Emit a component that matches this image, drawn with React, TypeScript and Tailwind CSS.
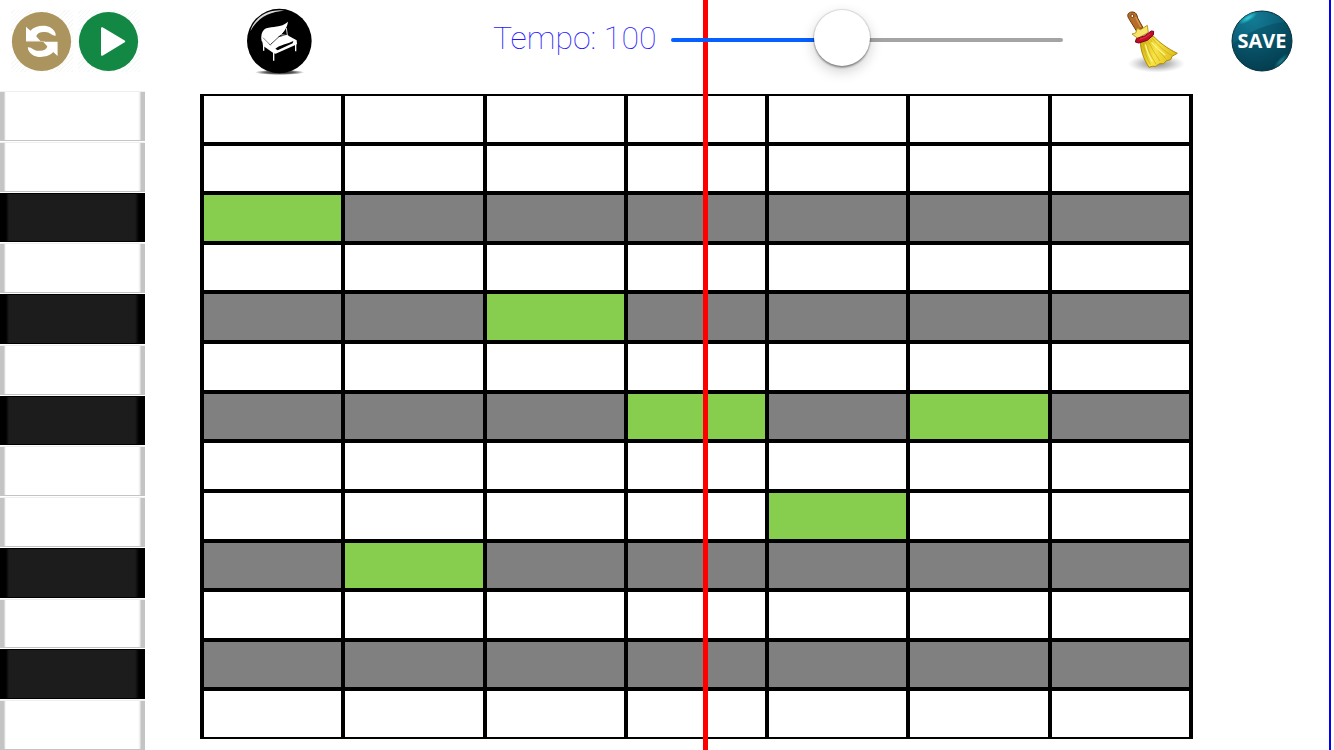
import { useState } from "react";

const NOTES = ["C5", "B4", "A#4", "A4", "G#4", "G4", "F#4", "F4", "E4", "D#4", "D4", "C#4", "C4"];
const STEPS = [0, 1, 2, 3, 4, 5, 6];
const MAX_TEMPO = 235;

function RestartIcon() {
  return (
    <svg viewBox="0 0 62 62" className="block size-full" aria-hidden="true">
      <circle cx="30.5" cy="31.5" r="29.6" fill="#ab945d" />
      <g fill="#fff">
        <path d="M15 16.7 19.4 20.7C24 15.4 34.5 14.4 39.5 17.6 43 19.6 44.8 22.8 44.8 25.6 40.5 26 39.5 22 34 22 29.5 21.6 26.2 23.2 25.2 26.2L29.4 31H15Z" />
        <path transform="rotate(180 30.8 31.4)" d="M15 16.7 19.4 20.7C24 15.4 34.5 14.4 39.5 17.6 43 19.6 44.8 22.8 44.8 25.6 40.5 26 39.5 22 34 22 29.5 21.6 26.2 23.2 25.2 26.2L29.4 31H15Z" />
      </g>
      <path d="M15 31.4H34" stroke="#d5c9ae" strokeWidth="1" />
    </svg>
  );
}

function PlayIcon() {
  return (
    <svg viewBox="0 0 62 62" className="block size-full" aria-hidden="true">
      <circle cx="30.5" cy="31.5" r="29.6" fill="#138844" />
      <path d="M24 18.2 46.2 31.4 24 44.8Z" fill="#fff" stroke="#fff" strokeWidth="2" strokeLinejoin="round" />
    </svg>
  );
}

function PianoIcon() {
  return (
    <svg viewBox="33 21 204 204" className="block size-full" aria-hidden="true">
      <defs>
        <radialGradient id="pianoShade">
          <stop offset="0" stopColor="#000" />
          <stop offset="0.6" stopColor="#000" stopOpacity="0.6" />
          <stop offset="1" stopColor="#000" stopOpacity="0" />
        </radialGradient>
      </defs>
      <ellipse cx="134" cy="217" rx="74" ry="8" fill="url(#pianoShade)" />
      <circle cx="133" cy="123" r="97" fill="#000" />
      <path d="M46 94C55 62 82 36 118 32 128 30 138 30 148 32 104 34 66 54 46 94Z" fill="#fff" opacity="0.85" />
      <path d="M80 124C77 104 81 91 94 85 112 77 138 85 159 65 156 88 140 106 106 134Z" fill="#fff" />
      <path d="M80 112 106 136 130 108 156 105 185 121 186 132 181 135 122 161 116 160 84 137Z" fill="#fff" />
      <path d="M108 132 141 102" stroke="#000" strokeWidth="2" />
      <path d="M128 112C140 103 150 94 156 83L158 104 147 107Z" fill="#000" />
      <path d="M154 84 157 105M136 104 160 107" stroke="#fff" strokeWidth="2.5" fill="none" />
      <path d="M121 146C134 135 158 132 175 123L173 130 128 151Z" fill="#000" />
      <path d="M84 113 107 136" stroke="#000" strokeWidth="1.5" fill="none" />
      <path d="M86 134V152M116 158V182M182 131V154" stroke="#fff" strokeWidth="4" />
    </svg>
  );
}

function BroomIcon() {
  return (
    <svg viewBox="38 24 186 195" className="block size-full" aria-hidden="true">
      <defs>
        <radialGradient id="broomShade">
          <stop offset="0" stopColor="#777" stopOpacity="0.9" />
          <stop offset="0.5" stopColor="#999" stopOpacity="0.6" />
          <stop offset="1" stopColor="#bbb" stopOpacity="0" />
        </radialGradient>
        <linearGradient id="straw" x1="0" x2="1" y1="0.4" y2="0.6">
          <stop offset="0" stopColor="#d3b512" />
          <stop offset="0.4" stopColor="#f7e545" />
          <stop offset="1" stopColor="#dcb916" />
        </linearGradient>
      </defs>
      <ellipse cx="138" cy="188" rx="86" ry="27" fill="url(#broomShade)" />
      <path d="M55 52C47 38 58 32 68 33 78 34 80 42 82 51L98 80 79 91Z" fill="#b56d27" stroke="#6f3c0d" strokeWidth="3" />
      <path d="M76 48 91 78" stroke="#d89549" strokeWidth="4" />
      <circle cx="66" cy="45" r="4.5" fill="#fff" stroke="#6f3c0d" strokeWidth="3" />
      <path d="M65 99 76 96 81 82 91 86 111 73 114 94 82 112Z" fill="#f8e36b" stroke="#ae8a08" strokeWidth="2.5" strokeLinejoin="round" />
      <path d="M90 122C91 148 99 173 116 199L126 196 136 196 148 188 160 188 168 179 181 176 185 166 201 157C171 142 147 125 129 105Z" fill="url(#straw)" stroke="#b08b08" strokeWidth="3" strokeLinejoin="round" />
      <path d="M98 121Q102 160 120 190M104 119Q116 158 137 190M111 116Q130 154 149 180M118 113Q143 150 168 175M124 110Q153 146 184 163" fill="none" stroke="#c9a81c" strokeWidth="2" />
      <path d="M105 130Q112 160 126 182M124 124Q144 148 164 162" fill="none" stroke="#fff78b" strokeWidth="4" />
      <path d="M78 113Q105 107 123 90L130 91 129 102 111 118 85 126 75 123Z" fill="#c40b27" stroke="#770515" strokeWidth="3" />
      <path d="M88 115Q108 110 120 99" stroke="#ef4a5d" strokeWidth="2" fill="none" />
    </svg>
  );
}

function SaveDisc() {
  return (
    <svg viewBox="0 0 62 62" className="col-start-1 row-start-1 block size-full" aria-hidden="true">
      <defs>
        <radialGradient id="disc" cx="0.35" cy="0.12" r="0.95">
          <stop offset="0" stopColor="#137c96" />
          <stop offset="0.5" stopColor="#0c5f78" />
          <stop offset="1" stopColor="#043b4c" />
        </radialGradient>
        <radialGradient id="glint">
          <stop offset="0" stopColor="#31d2dc" />
          <stop offset="1" stopColor="#31d2dc" stopOpacity="0" />
        </radialGradient>
      </defs>
      <circle cx="31" cy="31" r="30" fill="url(#disc)" stroke="#06303d" />
      <path d="M2 34C14 24 32 14 54 12A30 30 0 0 1 31 61 30 30 0 0 1 2 34Z" fill="#023b4c" opacity="0.35" />
      <ellipse cx="17" cy="8" rx="11" ry="3.5" transform="rotate(-32 17 8)" fill="url(#glint)" />
      <ellipse cx="50" cy="51" rx="10" ry="3" transform="rotate(-45 50 51)" fill="url(#glint)" opacity="0.45" />
    </svg>
  );
}

export default function App() {
  const [tempo, setTempo] = useState(100);
  const [active, setActive] = useState<string[]>(["A#4-0", "D#4-1", "G#4-2", "F#4-3", "E4-4", "F#4-5"]);
  const toggle = (id: string) =>
    setActive((cells) => (cells.includes(id) ? cells.filter((c) => c !== id) : [...cells, id]));
  const filled = (tempo / MAX_TEMPO) * 100;

  return (
    <div className="relative flex min-h-screen flex-col overflow-hidden bg-white font-['Liberation_Sans',sans-serif]">
      <div className="absolute inset-y-0 left-[52.7%] w-[5px] bg-[#ff0000]" />
      <div className="absolute inset-y-0 right-[3px] w-[2px] bg-[#0000ff]" />

      <header className="relative flex h-[82px] items-center pr-[41px] pl-[11px]">
        <div className="flex gap-[5px]">
          <button aria-label="Restart" className="size-[62px] bg-[repeating-linear-gradient(135deg,#fff_0_2px,#f8f8f6_2px_3px)]">
            <RestartIcon />
          </button>
          <button aria-label="Play" className="size-[62px] bg-[repeating-linear-gradient(135deg,#fff_0_2px,#f5f9f7_2px_3px)]">
            <PlayIcon />
          </button>
        </div>
        <button aria-label="Instrument" className="ml-[106px] size-[68px]">
          <PianoIcon />
        </button>
        <div className="ml-[179px] flex flex-1 items-center pb-[2px]">
          <label htmlFor="tempo" className="w-[178px] pb-1 font-['Roboto',sans-serif] text-[32px] leading-10 font-thin whitespace-nowrap text-[#2414ff]">
            Tempo: {tempo}
          </label>
          <input
            id="tempo"
            type="range"
            min={0}
            max={MAX_TEMPO}
            value={tempo}
            onChange={(e) => setTempo(Number(e.target.value))}
            style={{ backgroundImage: `linear-gradient(to right, #0560ff ${filled}%, #a4a4a4 ${filled}%)` }}
            className="h-1 min-w-0 flex-1 appearance-none rounded-full [&::-webkit-slider-runnable-track]:h-1 [&::-webkit-slider-thumb]:-mt-7 [&::-webkit-slider-thumb]:size-14 [&::-webkit-slider-thumb]:appearance-none [&::-webkit-slider-thumb]:rounded-full [&::-webkit-slider-thumb]:bg-white [&::-webkit-slider-thumb]:shadow-[0_0_1px_1px_rgba(0,0,0,0.12),0_2px_2px_rgba(0,0,0,0.3),0_5px_14px_rgba(0,0,0,0.2)]"
          />
        </div>
        <button aria-label="Clear" className="ml-[60px] h-[65px] w-[62px]">
          <BroomIcon />
        </button>
        <button className="ml-[46px] grid size-[62px] place-items-center">
          <SaveDisc />
          <span className="relative col-start-1 row-start-1 font-['Open_Sans',sans-serif] text-[20px] leading-5 font-bold text-white">SAVE</span>
        </button>
      </header>

      <main className="flex flex-1 pt-[9px]">
        <div className="flex w-[145px] shrink-0 flex-col gap-px">
          {NOTES.map((note) => (
            <button
              key={note}
              aria-label={`Key ${note}`}
              className={
                note.includes("#")
                  ? "min-h-6 flex-1 border-y border-black bg-[linear-gradient(to_right,#000_6px,#1c1c1c_9px,#1c1c1c_135px,#000_139px)]"
                  : "min-h-6 flex-1 border-t border-b border-t-[#efefef] border-b-[#c4c4c4] bg-[linear-gradient(to_right,#c4c4c4_4px,#eee_5px,#fff_6px,#fff_138px,#eee_140px,#c4c4c4_141px)]"
              }
            />
          ))}
        </div>
        <div className="relative mt-[3px] mr-[141px] mb-[11px] ml-[55px] grid flex-1 grid-cols-7 gap-1 bg-black px-1 py-[2px]">
          {NOTES.map((note) =>
            STEPS.map((step) => {
              const id = `${note}-${step}`;
              const on = active.includes(id);
              return (
                <button
                  key={id}
                  aria-label={`${note} step ${step + 1}`}
                  aria-pressed={on}
                  onClick={() => toggle(id)}
                  className={on ? "bg-[#87ce4f]" : note.includes("#") ? "bg-[#808080]" : "bg-white"}
                />
              );
            }),
          )}
        </div>
      </main>

      <div className="pointer-events-none absolute top-[82px] bottom-0 left-[52.7%] w-[5px] bg-[#ff0000]" />
    </div>
  );
}
